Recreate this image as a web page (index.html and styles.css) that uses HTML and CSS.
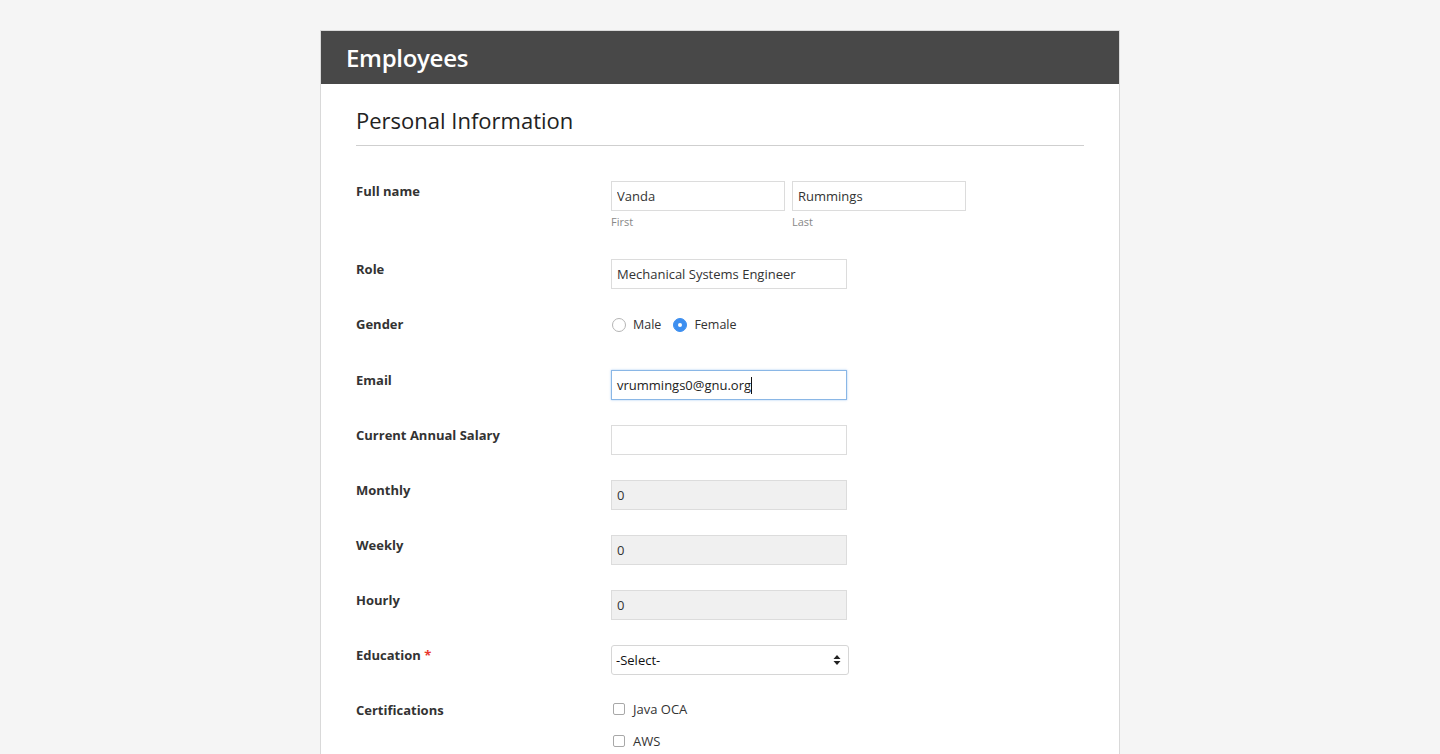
FILE: index.html
```html
<!DOCTYPE html>
<html>
<head>
<meta charset="utf-8">
<link rel="stylesheet" href="styles.css">
</head>
<body>
<div class="card">
  <div class="card-header">Employees</div>
  <div class="card-body">
    <h2 class="section-title">Personal Information</h2>
    <div class="form">
      <div class="row name-row">
        <label class="label">Full name</label>
        <div class="field name-fields">
          <div class="name-part">
            <input class="input input-name" type="text" value="Vanda">
            <div class="caption">First</div>
          </div>
          <div class="name-part">
            <input class="input input-name" type="text" value="Rummings">
            <div class="caption">Last</div>
          </div>
        </div>
      </div>
      <div class="row">
        <label class="label">Role</label>
        <div class="field"><input class="input" type="text" value="Mechanical Systems Engineer"></div>
      </div>
      <div class="row">
        <label class="label">Gender</label>
        <div class="field radios">
          <label class="choice"><span class="radio"></span>Male</label>
          <label class="choice"><span class="radio checked"></span>Female</label>
        </div>
      </div>
      <div class="row">
        <label class="label">Email</label>
        <div class="field"><div class="input focused">vrummings0@gnu.org<span class="caret"></span></div></div>
      </div>
      <div class="row">
        <label class="label">Current Annual Salary</label>
        <div class="field"><input class="input" type="text" value=""></div>
      </div>
      <div class="row">
        <label class="label">Monthly</label>
        <div class="field"><input class="input readonly" type="text" value="0" readonly></div>
      </div>
      <div class="row">
        <label class="label">Weekly</label>
        <div class="field"><input class="input readonly" type="text" value="0" readonly></div>
      </div>
      <div class="row">
        <label class="label">Hourly</label>
        <div class="field"><input class="input readonly" type="text" value="0" readonly></div>
      </div>
      <div class="row">
        <label class="label">Education <span class="req">*</span></label>
        <div class="field">
          <div class="select">-Select-
            <svg class="select-arrows" width="8" height="12" viewBox="0 0 8 12"><path d="M4 1 L7.5 5 L0.5 5 Z" fill="#222"/><path d="M4 11 L7.5 7 L0.5 7 Z" fill="#222"/></svg>
          </div>
        </div>
      </div>
      <div class="row">
        <label class="label">Certifications</label>
        <div class="field checks">
          <label class="check-item"><span class="checkbox"></span>Java OCA</label>
          <label class="check-item"><span class="checkbox"></span>AWS</label>
        </div>
      </div>
    </div>
  </div>
</div>
</body>
</html>
```
FILE: styles.css
```css
* { box-sizing: border-box; }
html, body { margin: 0; padding: 0; }
body {
  background: #f5f5f5;
  font-family: "Open Sans", "Liberation Sans", sans-serif;
  color: #333;
  overflow: hidden;
}
.card {
  width: 800px;
  margin: 30px auto 0;
  background: #fff;
  border: 1px solid #d9d9d9;
  border-bottom: none;
  min-height: 760px;
}
.card-header {
  background: #484848;
  color: #fff;
  height: 53px;
  padding: 0 25px;
  font-size: 24px;
  font-weight: 600;
  line-height: 53px;
  letter-spacing: -0.3px;
}
.card-body {
  padding: 21px 35px 0;
}
.section-title {
  margin: 0;
  font-size: 22px;
  font-weight: 400;
  line-height: 31px;
  color: #222;
  padding-bottom: 9px;
  border-bottom: 1px solid #cfcfcf;
}
.form {
  padding-top: 35px;
}
.row {
  display: flex;
  align-items: flex-start;
  margin-bottom: 25px;
}
.label {
  width: 255px;
  flex: none;
  font-size: 13px;
  font-weight: 700;
  line-height: 20px;
  color: #333;
}
.req { color: #e8382f; }
.field { flex: none; }
.name-fields { display: flex; gap: 7px; }
.input {
  display: block;
  width: 236px;
  height: 30px;
  border: 1px solid #dcdcdc;
  background: #fff;
  font-family: "Open Sans", "Liberation Sans", sans-serif;
  font-size: 13px;
  color: #333;
  padding: 0 5px;
  line-height: 28px;
  outline: none;
  margin: 0;
  border-radius: 0;
}
.input-name { width: 174px; }
.readonly { background: #f0f0f0; }
.focused {
  border-color: #8ab7e6;
  box-shadow: 0 0 2px rgba(80, 150, 230, 0.5);
  color: #222;
}
.caret {
  display: inline-block;
  width: 1px;
  height: 17px;
  background: #111;
  vertical-align: middle;
  margin-top: -3px;
}
.caption {
  font-size: 11px;
  color: #888;
  line-height: 16px;
  margin-top: 3px;
  height: 20px;
}
.radios {
  display: flex;
  gap: 11px;
  height: 31px;
  padding-top: 1px;
  font-size: 12.5px;
  line-height: 20px;
}
.choice {
  display: flex;
  align-items: center;
  height: 20px;
  color: #333;
}
.radio {
  width: 14px;
  height: 14px;
  border-radius: 50%;
  border: 1px solid #b5b5b5;
  background: #fff;
  margin-left: 1px;
  margin-right: 7px;
  position: relative;
}
.radio.checked {
  background: #3d8ff0;
  border-color: #3d8ff0;
}
.radio.checked::after {
  content: "";
  position: absolute;
  left: 4px;
  top: 4px;
  width: 4px;
  height: 4px;
  border-radius: 50%;
  background: #fff;
}
.select {
  width: 238px;
  height: 30px;
  border: 1px solid #d6d6d6;
  border-radius: 3px;
  background: #fff;
  font-size: 13px;
  line-height: 28px;
  padding: 0 4px;
  color: #111;
  display: flex;
  justify-content: space-between;
  align-items: center;
}
.select-arrows { margin-right: 3px; }
.checks {
  display: flex;
  flex-direction: column;
  gap: 12px;
  margin-top: -1px;
  font-size: 13px;
}
.check-item {
  display: flex;
  align-items: center;
  height: 20px;
  color: #333;
}
.checkbox {
  width: 12px;
  height: 12px;
  border: 1px solid #a8a8a8;
  border-radius: 2px;
  background: #fff;
  margin-left: 2px;
  margin-right: 8px;
}
```
